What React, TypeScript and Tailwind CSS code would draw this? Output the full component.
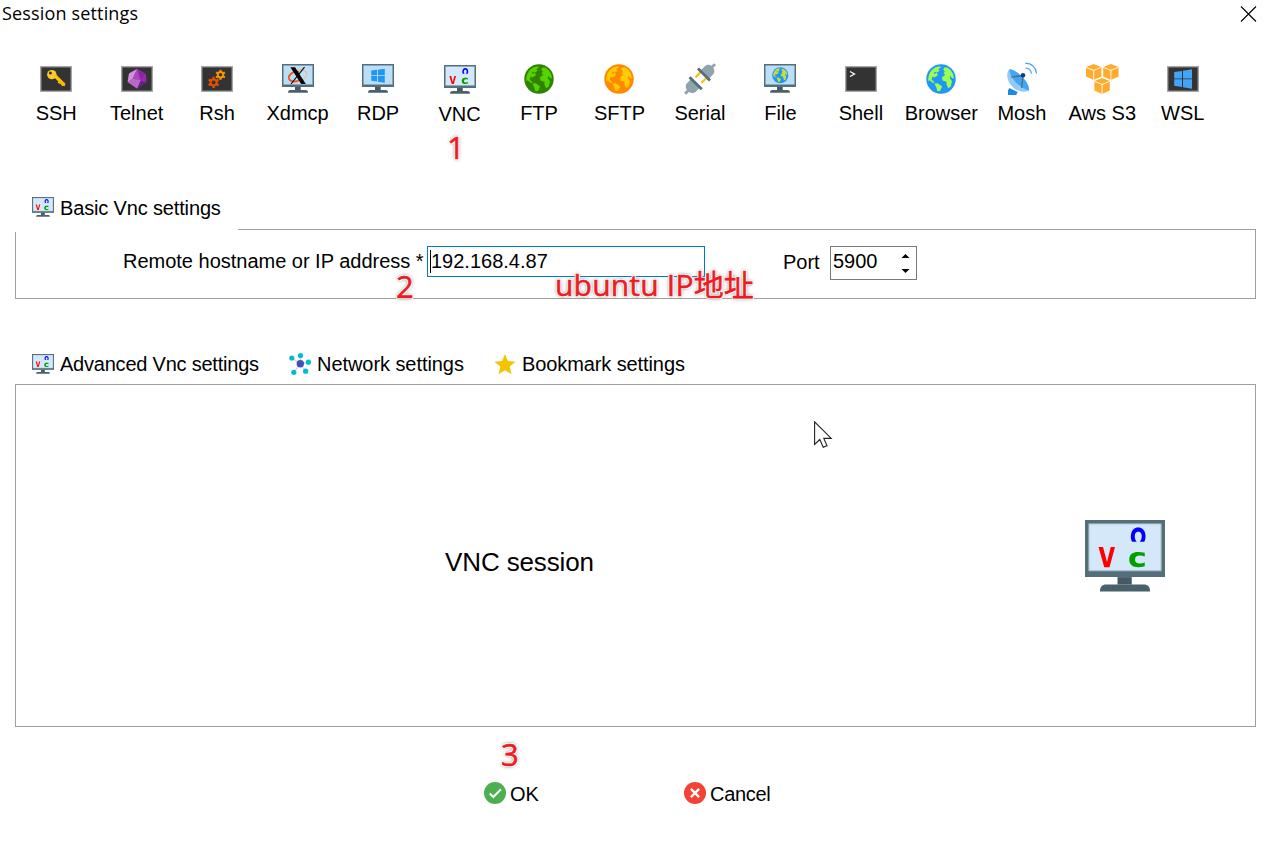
import type { ReactNode } from "react";

function Terminal({ children }: { children?: ReactNode }) {
  return (
    <svg width="32" height="30" viewBox="0 0 32 30" className="block">
      <rect x="0" y="2" width="32" height="26" fill="#a6a6a6" />
      <rect x="1.4" y="3.4" width="29.2" height="23.2" fill="#333" />
      {children}
    </svg>
  );
}

function MonitorFrame({ screen = "#bbdefb" }: { screen?: string }) {
  return (
    <>
      <path d="M0 0H32V23H0Z" fill="#546e7a" />
      <path d="M1.5 1.5H30.5V20.5H1.5Z" fill={screen} stroke="#90a4ae" strokeWidth="0.4" />
      <path d="M13 23H18.7V26H13Z" fill="#455a64" />
      <path d="M6 28.8C6 26.9 6.8 26 8.5 26H23.5C25.2 26 26 26.9 26 28.8Z" fill="#4a616c" />
    </>
  );
}

function Monitor({ children }: { children?: ReactNode }) {
  return (
    <svg width="32" height="30" viewBox="0 0 32 30" className="block">
      <MonitorFrame />
      {children}
    </svg>
  );
}

function VncIcon({ className }: { className: string }) {
  return (
    <svg viewBox="0 0 32 29" preserveAspectRatio="none" className={className}>
      <MonitorFrame screen="#d4e8fa" />
      <path d="M5.4 10.9H7.2L8.8 16.9L10.3 10.9H12L9.8 19H7.7Z" fill="#ff0000" />
      <path d="M18.9 8.8C17.9 7.2 18.1 3 21.3 3S24.7 7.2 23.7 8.8H21.9C23.1 7.3 23 4.7 21.3 4.7S19.5 7.3 20.7 8.8Z" fill="#0000ff" />
      <path d="M23.9 14.7C21.5 13.9 20 14.5 20 15.9S21.5 18 23.9 17.1V18.6C20.5 19.5 17.7 18.9 17.7 15.9S20.5 12.4 23.9 13.2Z" fill="#00a000" />
    </svg>
  );
}

function GlobeArt({ sea, land }: { sea: string; land: string }) {
  return (
    <>
      <circle cx="15" cy="15" r="14.7" fill={sea} />
      <path d="M3.2 10.5C4.4 6.8 8 3.2 12 2.4L15.6 2.8L12.2 5.2L13.7 6.6L10.7 9L12.1 11.1L8.6 13.5L6.6 12.4L5.6 15.8L8.4 18L7.4 19.2L3.5 16.2L2.3 17.2Q1.9 13.7 3.2 10.5Z" fill={land} />
      <path d="M8.4 19.4L11.7 19.2L16.2 22.4L13.8 27.2L11.2 27L10.4 23.6Z" fill={land} />
      <path d="M18.5 3.4L21 3.5C25.4 6 27.9 9.8 27.8 14.4L25.9 14L24.2 11.7L23.7 14L26 17.2L24.6 22.7L22.2 24.2L20.6 20.8L20.4 17.8L16.5 16.6L16 13.2L19.4 10.7L17.4 9.6L18.9 7.6L17.1 5.2Z" fill={land} />
      <path d="M7.6 9.2Q9.3 6.9 12.1 8.2L10 8.4Q9.5 10.6 7.6 9.2Z" fill={sea} />
    </>
  );
}

function Globe({ sea, land }: { sea: string; land: string }) {
  return (
    <svg width="30" height="30" viewBox="0 0 30 30" className="block">
      <GlobeArt sea={sea} land={land} />
    </svg>
  );
}

function Gear({ x, y, color }: { x: number; y: number; color: string }) {
  return (
    <g transform={`translate(${x} ${y})`} fill="none" stroke={color}>
      <circle r="3.1" strokeWidth="2.2" />
      {[30, 90, 150, 210, 270, 330].map((a) => (
        <path key={a} d="M3.6 0H5.7" strokeWidth="2.4" transform={`rotate(${a})`} />
      ))}
    </g>
  );
}

function WindowsLogo() {
  return (
    <path
      d="M9.2 6.6L15 5.8V11.3H9.2ZM15.9 5.7L22.8 4.7V11.3H15.9ZM9.2 12.1H15V17.5L9.2 16.7ZM15.9 12.1H22.8V18.7L15.9 17.7Z"
      fill="#2196f3"
    />
  );
}

function SerialIcon() {
  return (
    <svg width="32" height="32" viewBox="0 0 32 32" className="-mt-px block">
      <path d="M11.5 14.2L16.8 8.9M17.3 20L22.6 14.7" stroke="#ffc107" strokeWidth="2.2" />
      <path d="M17 7L20.6 3.4C22.5 1.5 25.5 1.3 27.4 2.8L30 0.2L32 2.2L29.3 4.8C31 7 30.7 10 28.8 11.8L25.2 15.4Z" fill="#90a4ae" />
      <path d="M7 16.2L3.3 19.8C1.4 21.7 1.2 24.8 2.8 26.9L0 29.6L2.2 31.8L5 29C7.1 30.7 10.1 30.4 12 28.5L15.6 24.9Z" fill="#90a4ae" />
      <path d="M14 5.6L26 17.5M5.6 14.2L17.8 26.2" stroke="#546e7a" strokeWidth="2.8" />
    </svg>
  );
}

function Cube({ x, y }: { x: number; y: number }) {
  return (
    <g transform={`translate(${x} ${y})`}>
      <path d="M7.7 0L15.4 3V12.4L7.7 15.9L0 12.4V3Z" fill="#ffab2e" />
      <path d="M0 3.3L7.7 6.4L15.4 3.3M7.7 6.4V16" fill="none" stroke="#fff" strokeWidth="0.9" />
    </g>
  );
}

function MoshIcon() {
  return (
    <svg width="32" height="33" viewBox="0 0 32 33" className="-mt-[2px] block">
      <path d="M3.4 26L12 30.2Q10.4 30.8 10.4 33H2V28.2Z" fill="#1e88e5" />
      <path d="M3.2 7.2C9.5 6.2 25 21.3 22.8 28.5C18 31.5 1.6 20 3.2 7.2Z" fill="#42a5f5" />
      <path d="M3.2 7.2C-4.5 18 12 34.5 22.8 28.5C13.5 25.5 4.4 17 3.2 7.2Z" fill="#90caf9" />
      <path d="M5.2 15.2L17 13.5L15.6 26" fill="none" stroke="#546e7a" strokeWidth="1.3" />
      <circle cx="17" cy="13.2" r="2.3" fill="#0d3c91" />
      <path d="M19.4 6Q25 6.4 25.4 11.6M19.2 1.2Q29.2 1.6 30.6 11.5" fill="none" stroke="#42a5f5" strokeWidth="1.2" />
    </svg>
  );
}

const sessions: { name: string; icon: ReactNode }[] = [
  {
    name: "SSH",
    icon: (
      <Terminal>
        <path d="M14 10.7L24.2 20.9" stroke="#ffc107" strokeWidth="3.5" />
        <path d="M19.5 16.2L17.6 18.6L19.4 20L20.4 19.2L21.6 21.4L24.6 22.3L25.4 20Z" fill="#f9b800" />
        <circle cx="11.8" cy="10.6" r="4.7" fill="#ffca28" />
        <circle cx="10.4" cy="9.1" r="1.5" fill="#333" />
      </Terminal>
    ),
  },
  {
    name: "Telnet",
    icon: (
      <Terminal>
        <path d="M16 5L25 10.2L25.2 18L16 24.5L6.7 18L8 9.4Z" fill="#ab47bc" />
        <path d="M16 5L8 9.4L6.7 18L11.7 14.7Z" fill="#ce93d8" />
        <path d="M16 5L25 10.2L19.5 16.4Z" fill="#8e24aa" />
        <path d="M25 10.2L25.2 18L19.5 16.4Z" fill="#9c27b0" />
        <path d="M19.5 16.4L25.2 18L16 24.5Z" fill="#6a1b9a" />
        <path d="M16 5L11.7 14.7L19.5 16.4Z" fill="#ab47bc" />
        <path d="M11.7 14.7L19.5 16.4L16 24.5L6.7 18Z" fill="#ba68c8" />
      </Terminal>
    ),
  },
  {
    name: "Rsh",
    icon: (
      <Terminal>
        <Gear x={12.6} y={18.4} color="#e65100" />
        <g transform="translate(19.5 10.8) scale(.88)">
          <Gear x={0} y={0} color="#fb9600" />
        </g>
      </Terminal>
    ),
  },
  {
    name: "Xdmcp",
    icon: (
      <Monitor>
        <ellipse cx="16" cy="12" rx="9.2" ry="5.7" fill="none" stroke="#ffb46b" strokeWidth="1" transform="rotate(-20 16 12)" />
        <path d="M17 7.8C10 6.8 5.7 11.5 7.2 15.2C8.5 18.2 14 18.2 18.5 15.8" fill="none" stroke="#f4511e" strokeWidth="1.7" />
        <path d="M8.4 3.2H13L23.8 19.9H19.2Z" fill="#000" />
        <path d="M22.5 3.2L9 20" stroke="#000" strokeWidth="1.1" />
      </Monitor>
    ),
  },
  { name: "RDP", icon: <Monitor><WindowsLogo /></Monitor> },
  { name: "VNC", icon: <VncIcon className="block h-[29px] w-8" /> },
  { name: "FTP", icon: <Globe sea="#308200" land="#55d400" /> },
  { name: "SFTP", icon: <Globe sea="#ff8800" land="#ffcc00" /> },
  { name: "Serial", icon: <SerialIcon /> },
  {
    name: "File",
    icon: (
      <Monitor>
        <g transform="translate(8 3) scale(.55)">
          <GlobeArt sea="#2196f3" land="#cddc39" />
        </g>
      </Monitor>
    ),
  },
  {
    name: "Shell",
    icon: (
      <Terminal>
        <path d="M5 7.5L9.5 10L5 12.5" fill="none" stroke="#fff" strokeWidth="1.3" />
      </Terminal>
    ),
  },
  { name: "Browser", icon: <Globe sea="#2196f3" land="#99ff55" /> },
  { name: "Mosh", icon: <MoshIcon /> },
  {
    name: "Aws S3",
    icon: (
      <svg width="33" height="31" viewBox="0 0 33 31" className="block">
        <Cube x={0} y={0} />
        <Cube x={17.2} y={0} />
        <Cube x={8.4} y={14} />
      </svg>
    ),
  },
  {
    name: "WSL",
    icon: (
      <Terminal>
        <path d="M7.2 8L15 6.9V14.4H7.2ZM16 6.7L25 5.2V14.4H16ZM7.2 15.3H15V23L7.2 21.7ZM16 15.3H25V24.8L16 23.2Z" fill="#42a5f5" />
      </Terminal>
    ),
  },
];

function NetworkIcon() {
  return (
    <svg width="22" height="22" viewBox="0 0 22 22" className="block shrink-0">
      <path d="M11.3 10.8L3 5M11.3 10.8L11.5 2.5M11.3 10.8L19.3 9.2M11.3 10.8L4.8 19.3M11.3 10.8L16.8 18.2" stroke="#cfd8dc" strokeWidth="1.2" />
      <g fill="#00bcd4">
        <circle cx="2.8" cy="5" r="2.6" />
        <circle cx="11.5" cy="2.6" r="2.6" />
        <circle cx="19.4" cy="9.2" r="2.6" />
        <circle cx="4.8" cy="19.3" r="2.6" />
        <circle cx="16.6" cy="18.2" r="2.6" />
      </g>
      <circle cx="11.3" cy="10.8" r="3.7" fill="#3f51b5" />
    </svg>
  );
}

const note =
  "absolute whitespace-nowrap font-['Open_Sans','Noto_Sans_CJK_SC',sans-serif] text-[#ed1c24] [-webkit-text-stroke:0.6px_#ed1c24] [text-shadow:1px_0_#fff,-1px_0_#fff,0_1px_#fff,0_-1px_#fff,1px_1px_#fff,-1px_-1px_#fff,1px_-1px_#fff,-1px_1px_#fff,0_0_3px_#777,0_0_4px_#999]";

export default function App() {
  return (
    <main className="relative flex h-[844px] w-[1273px] flex-col overflow-hidden bg-white font-['Liberation_Sans',Arial,sans-serif] text-[20px] leading-6 text-black">
      <header className="flex h-7 shrink-0 items-center justify-between pl-[2px] pr-4">
        <h1 className="-mt-[2px] font-['Open_Sans',sans-serif] text-[18px] leading-7 tracking-[0.16px]">Session settings</h1>
        <button aria-label="Close">
          <svg width="17" height="16" viewBox="0 0 17 16" className="block">
            <path d="M1 0.5L16 15.5M16 0.5L1 15.5" stroke="#000" strokeWidth="1.1" />
          </svg>
        </button>
      </header>

      <nav className="ml-4 mt-[35px] grid h-[90px] w-[1207px] shrink-0 grid-cols-15">
        {sessions.map(({ name, icon }) => (
          <button
            key={name}
            className={
              name === "VNC"
                ? "flex flex-col items-center whitespace-nowrap pl-[2px] pt-px"
                : "flex flex-col items-center whitespace-nowrap"
            }
          >
            <span className="flex h-[38px] items-start pt-px">{icon}</span>
            <span>{name}</span>
          </button>
        ))}
      </nav>

      <section className="mx-[15px] mt-[33px] flex h-[113px] w-[1241px] shrink-0 flex-col">
        <div className="flex h-[44px] shrink-0">
          <div className="flex w-[223px] items-start gap-[6px] pl-[17px] pt-[11px]">
            <VncIcon className="block h-5 w-[22px] shrink-0" />
            <h2 className="-mt-px whitespace-nowrap tracking-[-0.15px]">Basic Vnc settings</h2>
          </div>
          <div className="flex-1 border-b border-[#a0a0a0]" />
        </div>
        <div className="flex flex-1 items-stretch">
          <div className="mt-[2px] w-px bg-[#a0a0a0]" />
          <div className="flex flex-1 items-start border-b border-r border-[#a0a0a0] pl-[107px] pt-[2px]">
            <label htmlFor="host" className="mt-[17px] w-[304px] whitespace-nowrap tracking-[-0.01px]">
              Remote hostname or IP address *
            </label>
            <div className="mt-[14px] flex h-[31px] w-[278px] items-center border border-[#0078d7] pl-[2px]">
              <span className="h-[23px] w-px bg-black" />
              <input id="host" className="-mt-[2px] w-[260px] outline-none" defaultValue="192.168.4.87" />
            </div>
            <label htmlFor="port" className="ml-[78px] mt-[18px] w-[47px]">
              Port
            </label>
            <div className="mt-[14px] flex h-[34px] w-[87px] justify-between border border-[#7a7a7a] pl-[2px] pr-[6px]">
              <input id="port" className="h-7 w-[54px] outline-none" defaultValue="5900" />
              <div className="flex flex-col justify-between pb-[6px] pt-[7px]">
                <svg width="9" height="4" viewBox="0 0 9 4"><path d="M4.5 0L8.5 4H.5Z" /></svg>
                <svg width="9" height="4" viewBox="0 0 9 4"><path d="M.5 0H8.5L4.5 4Z" /></svg>
              </div>
            </div>
          </div>
        </div>
      </section>

      <div className="ml-8 mt-[53px] flex h-8 shrink-0 items-start whitespace-nowrap">
        <div className="flex w-[257px] items-start gap-[6px]">
          <VncIcon className="mt-[2px] block h-5 w-[22px] shrink-0" />
          <span className="tracking-[-0.22px]">Advanced Vnc settings</span>
        </div>
        <div className="flex w-[205px] items-start gap-[6px]">
          <div className="mt-px"><NetworkIcon /></div>
          <span className="tracking-[-0.06px]">Network settings</span>
        </div>
        <div className="flex items-start gap-[6px]">
          <svg width="22" height="21" viewBox="0 0 22 21" className="mt-[2px] block">
            <path d="M11 0L13.9 7.1L21.6 7.7L15.7 12.6L17.5 20.3L11 16.2L4.5 20.3L6.3 12.6L.4 7.7L8.1 7.1Z" fill="#f4c400" />
          </svg>
          <span className="tracking-[-0.1px]">Bookmark settings</span>
        </div>
      </div>

      <section className="ml-[15px] flex h-[343px] w-[1241px] shrink-0 items-center justify-between border border-[#a0a0a0] pl-[429px] pr-[90px]">
        <p className="mt-3 text-[26px] leading-8 tracking-[-0.12px]">VNC session</p>
        <VncIcon className="block h-[72px] w-20" />
      </section>

      <footer className="mt-[54px] flex items-center pl-[484px]">
        <button className="flex w-[200px] items-center gap-1">
          <svg width="22" height="22" viewBox="0 0 22 22" className="-mt-px">
            <circle cx="11" cy="11" r="11" fill="#4caf50" />
            <path d="M5.8 11.5L9.3 15L17 7.3" fill="none" stroke="#fff" strokeWidth="2" />
          </svg>
          <span className="mt-px">OK</span>
        </button>
        <button className="flex items-center gap-1">
          <svg width="22" height="22" viewBox="0 0 22 22" className="-mt-px">
            <circle cx="11" cy="11" r="11" fill="#f44336" />
            <path d="M6.9 6.9L15.1 15.1M15.1 6.9L6.9 15.1" stroke="#fff" strokeWidth="2.3" />
          </svg>
          <span className="mt-px tracking-[-0.3px]">Cancel</span>
        </button>
      </footer>

      <span className={`${note} left-[447px] top-[127px] text-[31px] leading-10`}>1</span>
      <span className={`${note} left-[396px] top-[266px] text-[31px] leading-10`}>2</span>
      <span className={`${note} left-[555px] top-[265px] text-[30px] leading-10 tracking-[0.2px]`}>ubuntu IP地址</span>
      <span className={`${note} left-[501px] top-[734px] text-[31px] leading-10`}>3</span>

      <svg width="19" height="28" viewBox="0 0 19 28" className="absolute left-[814px] top-[421px]">
        <path d="M.6.8V23.5L5.8 18.5L9.2 26.3L13 24.7L9.8 17.4H17.2Z" fill="#fff" stroke="#222" strokeWidth="1.1" />
      </svg>
    </main>
  );
}
